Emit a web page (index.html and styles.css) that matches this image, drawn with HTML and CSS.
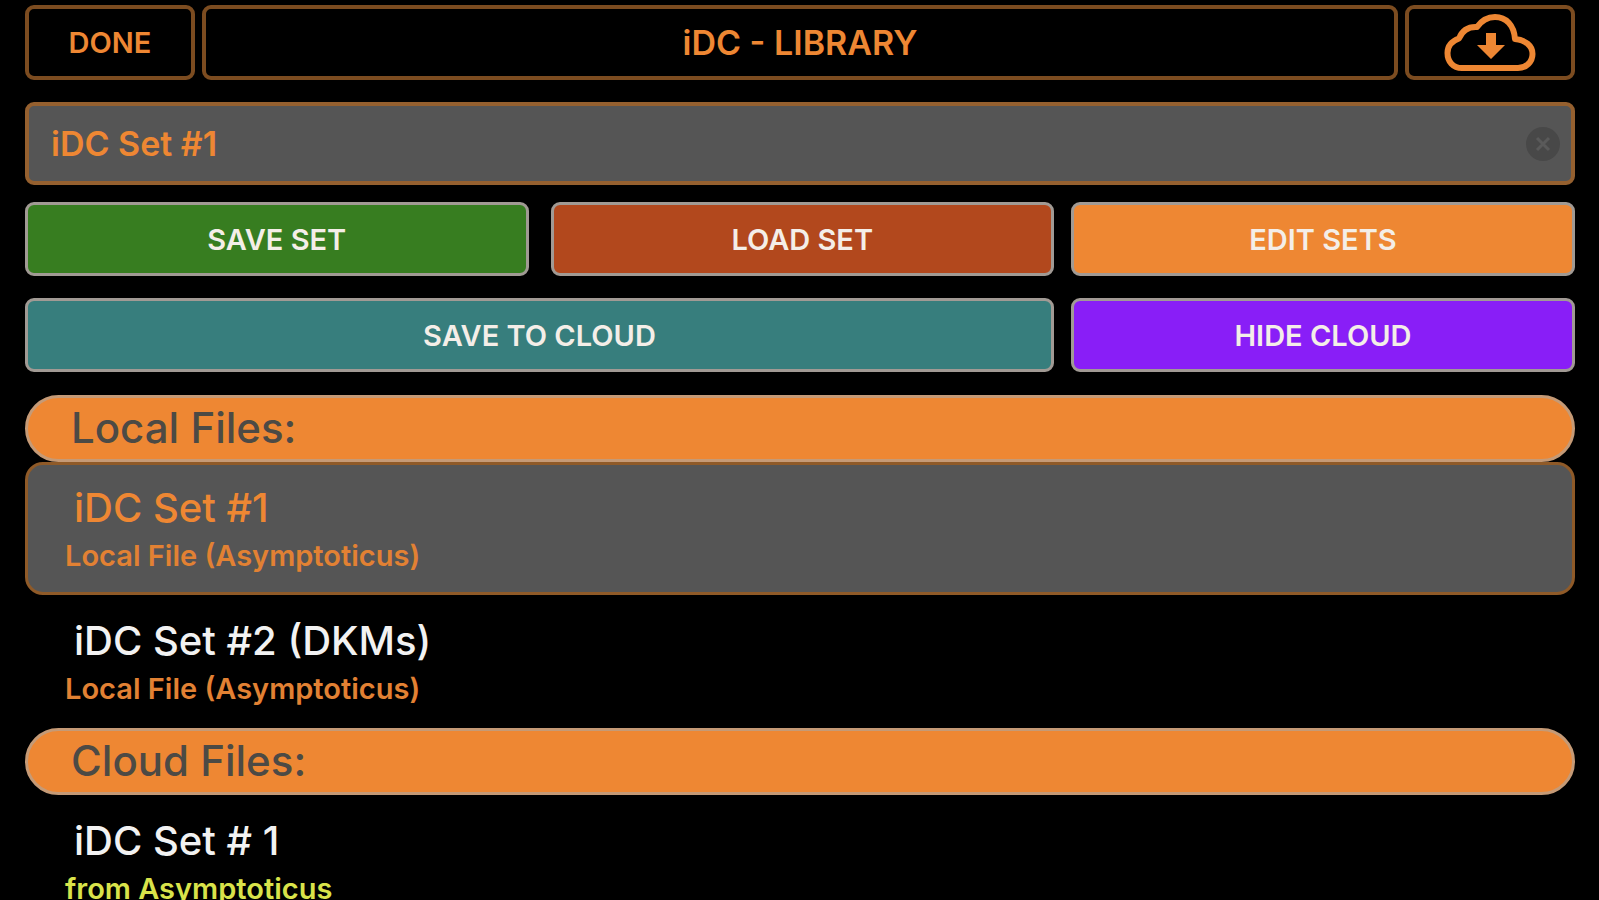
FILE: index.html
```html
<!DOCTYPE html>
<html lang="en">
<head>
  <meta charset="UTF-8" />
  <meta name="viewport" content="width=device-width, initial-scale=1.0" />
  <title>iDC - Library</title>
  <link rel="stylesheet" href="styles.css">
</head>
<body>
  <header class="top-bar">
    <button class="outline-btn" type="button">DONE</button>
    <h1 class="page-title">iDC - LIBRARY</h1>
    <button class="outline-btn" type="button" aria-label="Download from cloud">
      <svg class="cloud-icon" viewBox="0 0 92 58" width="92" height="58" aria-hidden="true">
        <path d="M18 54C9 54 3.500 47.500 3.500 39C3.500 32 8 27 15 24.500C18 17 24 12.500 33 13C38 6 43 3 51 3C62 3 70 11 71 25C81 26 88.500 31.500 88.500 40C88.500 48 82 54 74 54Z" fill="none" stroke="currentColor" stroke-width="6" stroke-linejoin="round"/>
        <path d="M42 19H52V31H61L47 45L33 31H42Z" fill="currentColor"/>
      </svg>
    </button>
  </header>

  <form class="name-box">
    <input class="name-input" type="text" aria-label="Set name" value="iDC Set #1">
    <button class="clear-btn" type="reset" aria-label="Clear name">
      <svg viewBox="0 0 34 34" width="34" height="34" aria-hidden="true">
        <circle cx="17" cy="17" r="17" fill="#484848"/>
        <path d="M11 11L23 23M23 11L11 23" stroke="#5a5a5a" stroke-width="3"/>
      </svg>
    </button>
  </form>

  <div class="actions">
    <div class="action-pair">
      <button class="action-btn save" type="button">SAVE SET</button>
      <button class="action-btn load" type="button">LOAD SET</button>
    </div>
    <button class="action-btn edit" type="button">EDIT SETS</button>
    <button class="action-btn cloud" type="button">SAVE TO CLOUD</button>
    <button class="action-btn hide" type="button">HIDE CLOUD</button>
  </div>

  <main class="library">
    <h2 class="section-title">Local Files:</h2>
    <button class="file selected" type="button">
      <span class="file-name">iDC Set #1</span>
      <span class="file-source">Local File (Asymptoticus)</span>
    </button>
    <button class="file" type="button">
      <span class="file-name">iDC Set #2 (DKMs)</span>
      <span class="file-source">Local File (Asymptoticus)</span>
    </button>
    <h2 class="section-title">Cloud Files:</h2>
    <button class="file" type="button">
      <span class="file-name">iDC Set # 1</span>
      <span class="file-source shared">from Asymptoticus</span>
    </button>
  </main>
</body>
</html>
```
FILE: styles.css
```css
* {
  box-sizing: border-box;
}
body {
  margin: 0;
  height: 100vh;
  overflow: hidden;
  padding: 5px 24px 0 25px;
  background-color: #000;
  color: #ee8733;
  font-family: Inter, sans-serif;
  font-weight: 600;
}
button, input {
  font: inherit;
  color: inherit;
}
button {
  padding: 0;
  cursor: pointer;
}
.top-bar {
  display: grid;
  grid-template-columns: 170px 1fr 170px;
  gap: 7px;
  height: 75px;
}
.outline-btn, .page-title {
  display: flex;
  align-items: center;
  justify-content: center;
  margin: 0;
  border: 4px solid #7c4c20;
  border-radius: 9px;
  background-color: #000;
}
.outline-btn {
  font-size: 29px;
}
.page-title {
  font-size: 34px;
  font-weight: 600;
}
.name-box {
  display: flex;
  align-items: center;
  height: 83px;
  margin: 22px 0 17px;
  padding: 0 11px 0 22px;
  border: 4px solid #95602f;
  border-radius: 9px;
  background-color: #555;
}
.name-input {
  flex: 1;
  min-width: 0;
  padding: 0;
  border: none;
  outline: none;
  background: none;
  font-size: 34px;
}
.clear-btn {
  display: flex;
  border: none;
  background: none;
}
.actions {
  display: grid;
  grid-template-columns: 49fr 24fr;
  gap: 22px 17px;
}
.action-pair {
  display: grid;
  grid-template-columns: 1fr 1fr;
  gap: 22px;
}
.action-btn {
  height: 74px;
  border: 3px solid #a19a94;
  border-radius: 9px;
  color: #f4eee8;
  font-size: 29px;
}
.save {
  background-color: #377d20;
}
.load {
  background-color: #b2481d;
}
.edit {
  background-color: #ee8733;
}
.cloud {
  background-color: #377e7d;
}
.hide {
  background-color: #891ef7;
}
.library {
  display: flex;
  flex-direction: column;
  margin-top: 23px;
}
.section-title {
  height: 67px;
  margin: 0;
  padding-left: 43px;
  border: 3px solid #c59a76;
  border-radius: 34px;
  background-color: #ee8733;
  color: #4c4a45;
  font-size: 42px;
  font-weight: 500;
  line-height: 60px;
}
.file {
  display: flex;
  flex-direction: column;
  height: 133px;
  padding: 19px 0 0 37px;
  border: 3px solid transparent;
  border-radius: 18px;
  background: none;
  color: #f2f2f2;
  text-align: left;
}
.file-name {
  padding-left: 9px;
  font-size: 40px;
  font-weight: 500;
  line-height: 48px;
}
.file-source {
  color: #e28133;
  font-size: 29px;
  line-height: 48px;
}
.selected {
  border-color: #8f5a28;
  background-color: #555;
  color: #ee8733;
}
.shared {
  color: #d9e34a;
}
```
